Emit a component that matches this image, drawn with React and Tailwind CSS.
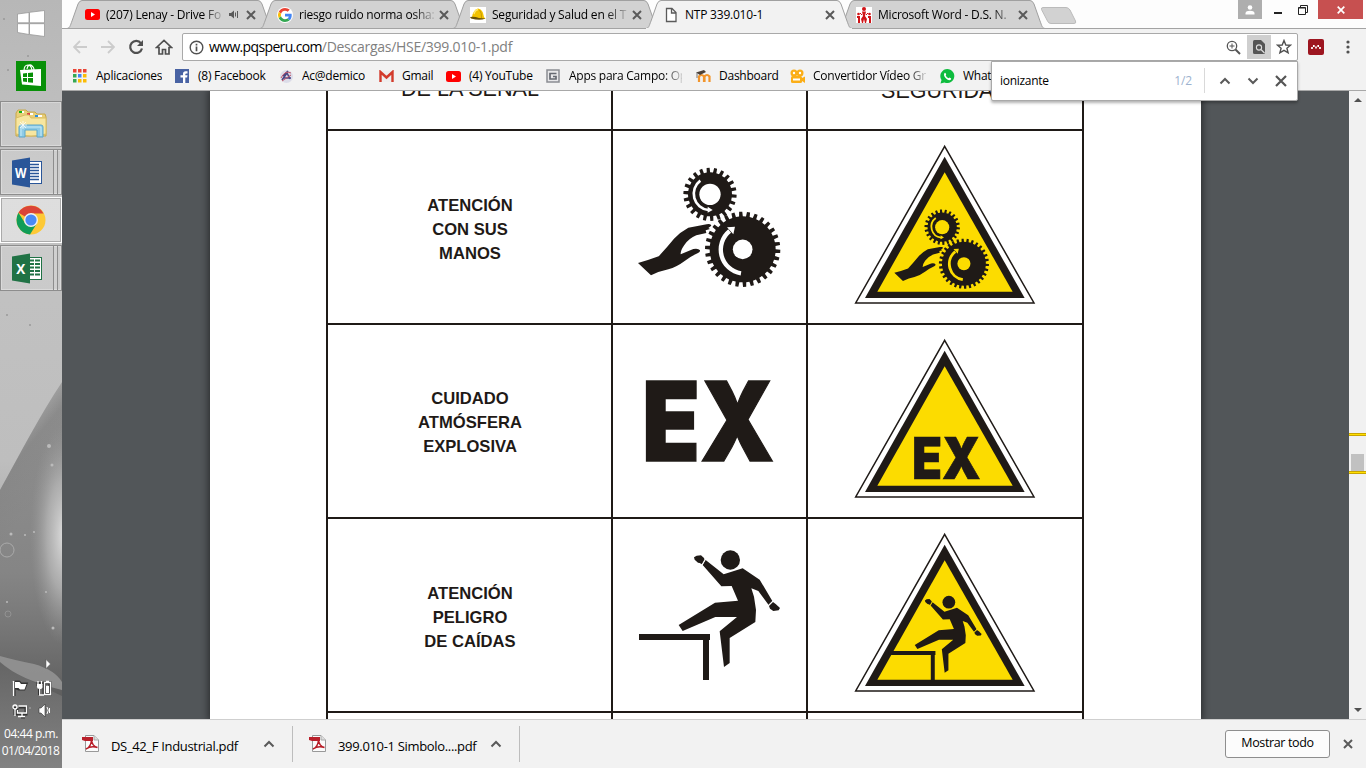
import React from "react";

const INK = "#1f1a17";
const SEGOE = "font-['Open_Sans','Noto_Sans',sans-serif]";

/* ---------- small glyphs ---------- */

function Cross({ className = "" }) {
  return (
    <svg className={className} width="10" height="10" viewBox="0 0 10 10">
      <path d="M1 1L9 9M9 1L1 9" stroke="#5a5a5a" strokeWidth="2" />
    </svg>
  );
}

function Caret({ down }) {
  return (
    <svg width="12" height="8" viewBox="0 0 12 8">
      <path d={down ? "M1.5 1.5L6 6L10.5 1.5" : "M1.5 6.5L6 2L10.5 6.5"} fill="none" stroke="#5a5a5a" strokeWidth="2" />
    </svg>
  );
}

function YouTubeIcon() {
  return (
    <svg width="15" height="15" viewBox="0 0 15 15">
      <rect x="0" y="2" width="15" height="11" rx="2.5" fill="#f00" />
      <path d="M6 5L10 7.500L6 10Z" fill="#fff" />
    </svg>
  );
}

function GoogleIcon() {
  return (
    <svg width="16" height="16" viewBox="0 0 48 48">
      <circle cx="24" cy="24" r="24" fill="#fff" />
      <g transform="translate(3 3) scale(.875)">
        <path fill="#EA4335" d="M24 9.500c3.500 0 6.700 1.200 9.200 3.600l6.900-6.900C35.900 2.400 30.500 0 24 0 14.600 0 6.500 5.400 2.600 13.200l8 6.200C12.400 13.700 17.700 9.500 24 9.500z" />
        <path fill="#4285F4" d="M47 24.500c0-1.600-.2-3.100-.4-4.500H24v9h12.900c-.6 3-2.300 5.500-4.800 7.200l7.700 6C44.400 38 47 31.800 47 24.500z" />
        <path fill="#FBBC05" d="M10.500 28.600a14.500 14.500 0 0 1 0-9.200l-8-6.200a24 24 0 0 0 0 21.600z" />
        <path fill="#34A853" d="M24 48c6.500 0 11.900-2.100 15.900-5.800l-7.700-6c-2.200 1.500-5 2.300-8.200 2.300-6.300 0-11.600-4.200-13.500-9.900l-8 6.200C6.500 42.600 14.600 48 24 48z" />
      </g>
    </svg>
  );
}

function HelmetIcon() {
  return (
    <svg width="16" height="16" viewBox="0 0 16 16">
      <rect width="16" height="16" fill="#fff" />
      <path d="M2 10Q3 3 8 1.500Q13 2 14 10L15.500 12L9 12Z" fill="#f2c200" />
      <path d="M4 7Q5 3 8 2.500" stroke="#ffe970" fill="none" strokeWidth="1.300" />
      <path d="M9.500 3Q12 6 11.500 11" stroke="#c99a00" fill="none" />
      <path d="M0 10Q4 9 9 11L15.500 11.500Q10 14 1 11.500Z" fill="#6b5306" />
    </svg>
  );
}

function PageIcon() {
  return (
    <svg width="16" height="16" viewBox="0 0 16 16">
      <path d="M3.500 1.500H9L13 5.500V14.500H3.500ZM8.500 1.500V6H13" fill="#fff" stroke="#5a5a5a" strokeWidth="1.300" />
    </svg>
  );
}

function PeopleIcon() {
  return (
    <svg width="16" height="16" viewBox="0 0 16 16">
      <rect width="16" height="16" fill="#fff" />
      <g fill="#d01418">
        <circle cx="8" cy="2" r="2" />
        <path d="M6 4.500H10L9 9L11 12L10 16H9L8 12L7 16H6L5 12L7 9Z" />
        <circle cx="2.500" cy="7" r="1.300" /><circle cx="13.500" cy="7" r="1.300" />
        <path d="M1 9H4V16H2V11H1ZM12 9H15V16H13V11H12Z" />
        <path d="M4 6L6 8M12 6L10 8" stroke="#d01418" />
      </g>
    </svg>
  );
}

function SpeakerIcon() {
  return (
    <svg width="10" height="9" viewBox="0 0 10 9">
      <path d="M0 3H2L5 .5V8.500L2 6H0Z" fill="#5a5a5a" />
      <path d="M6.500 2.500V6.500M8.500 1V8" stroke="#5a5a5a" fill="none" />
    </svg>
  );
}

/* ---------- tab strip ---------- */

function Tab({ icon, title, active, audio, first }) {
  return (
    <div className={`relative h-[29px] w-[206px] shrink-0 ${first ? "" : "-ml-[13px]"} ${active ? "z-10" : ""}`}>
      <svg className="absolute inset-0" width="206" height="29" viewBox="0 0 206 29">
        <path d="M0 28.500C3 28 3 26 5 21L11 4Q12.500 .5 15 .5H191Q193.500 .5 195 4L201 21C203 26 203 28 206 28.500" fill={active ? "#f2f2f2" : "#d2d2d2"} stroke="#a0a0a0" />
        <path d="M0 28.500H206" stroke={active ? "#f2f2f2" : "#a3a3a3"} />
      </svg>
      <div className="relative flex h-[29px] items-center pl-[17px] pr-[17px]">
        <span className="flex w-4 justify-center">{icon}</span>
        <span className={`ml-[6px] overflow-hidden whitespace-nowrap text-[12px] leading-4 tracking-[-0.22px] text-black ${audio ? "w-[116px]" : "w-[135px]"} ${active ? "" : "[mask-image:linear-gradient(to_right,black_84%,rgba(0,0,0,0.15))]"}`}>
          {title}
        </span>
        {audio && <span className="ml-[7px] flex w-[10px]"><SpeakerIcon /></span>}
        <Cross className="ml-auto" />
      </div>
    </div>
  );
}

function TabStrip() {
  return (
    <div className="relative flex h-[28px] bg-[#fdfdfd] pl-[5px] pr-[3px]">
      <Tab first audio icon={<YouTubeIcon />} title="(207) Lenay - Drive Fo" />
      <Tab icon={<GoogleIcon />} title="riesgo ruido norma osha:" />
      <Tab icon={<HelmetIcon />} title="Seguridad y Salud en el T" />
      <Tab active icon={<PageIcon />} title="NTP 339.010-1" />
      <Tab icon={<PeopleIcon />} title="Microsoft Word - D.S. N." />
      <svg className="-ml-[5px] mt-[6px]" width="38" height="19" viewBox="0 0 38 19">
        <path d="M3 1.500H26Q28.500 1.500 30 4L35.500 15Q36.500 17.500 34 17.500H11Q8.500 17.500 7.500 15L1.500 3.500Q1 1.500 3 1.500Z" fill="#d2d2d2" stroke="#bbb" />
      </svg>
      <div className="ml-auto flex items-start">
        <div className="flex h-[19px] w-6 items-center justify-center bg-[#aeaeae]">
          <svg width="10" height="10" viewBox="0 0 10 10" fill="#fff"><circle cx="5" cy="2.500" r="2.300" /><path d="M.5 9.500V8Q1 5.700 5 5.700Q9 5.700 9.500 8V9.500Z" /></svg>
        </div>
        <div className="flex h-5 w-5 items-center justify-end pt-[5px]"><div className="h-[2px] w-2 bg-[#222]" /></div>
        <div className="flex h-5 w-9 items-center justify-center pl-[6px]">
          <svg width="10" height="10" viewBox="0 0 10 10" fill="none" stroke="#222"><path d="M.5 2.500H7.500V9.500H.5ZM.5 3H7.500M2.500 2V.5H9.500V7.500H8" /></svg>
        </div>
        <div className="flex h-[19px] w-[45px] items-center justify-center bg-[#c75050]">
          <svg width="8" height="8" viewBox="0 0 8 8"><path d="M.7 .7L7.300 7.300M7.300 .7L.7 7.300" stroke="#fff" strokeWidth="1.700" /></svg>
        </div>
      </div>
    </div>
  );
}

/* ---------- address bar ---------- */

function Toolbar() {
  return (
    <div className="flex h-[35px] items-center border-t border-[#a3a3a3] bg-[#f2f2f2] pt-[2px]">
      <div className="flex w-[120px] items-center pl-[11px]">
        <svg width="14" height="14" viewBox="0 0 14 14" fill="none" stroke="#ccc" strokeWidth="1.800"><path d="M14 7H1.500M7 1L1 7L7 13" /></svg>
        <svg className="ml-[14px]" width="14" height="14" viewBox="0 0 14 14" fill="none" stroke="#ccc" strokeWidth="1.800"><path d="M0 7H12.500M7 1L13 7L7 13" /></svg>
        <svg className="ml-[13px]" width="16" height="16" viewBox="0 0 16 16"><path d="M13 4.300A6 6 0 1 0 14 9.500" fill="none" stroke="#505050" strokeWidth="2.200" /><path d="M15 1V7H9Z" fill="#505050" /></svg>
        <svg className="ml-[11px]" width="18" height="16" viewBox="0 0 18 16"><path d="M1.500 8.500L9 1.500L16.500 8.500H14V15H10.500V10.500H7.500V15H4V8.500Z" fill="none" stroke="#505050" strokeWidth="1.700" /></svg>
      </div>
      <div className="flex h-[28px] w-[1116px] items-center rounded-[2px] border border-[#a9a9a9] bg-white pl-[6px]">
        <svg width="15" height="15" viewBox="0 0 15 15"><circle cx="7.500" cy="7.500" r="6.300" fill="none" stroke="#505050" strokeWidth="1.400" /><path d="M7.500 6.500V11.200M7.500 3.700V5.400" stroke="#505050" strokeWidth="1.700" /></svg>
        <span className="ml-[5px] whitespace-nowrap text-[14px] leading-5 tracking-[-0.270px] text-[#808080]"><span className="tracking-[-0.650px] text-black">www.pqsperu.com</span>/Descargas/HSE/399.010-1.pdf</span>
        <div className="ml-auto flex items-center">
          <svg className="mr-[6px]" width="15" height="15" viewBox="0 0 15 15" fill="none" stroke="#555"><circle cx="6" cy="6" r="4.700" strokeWidth="1.300" /><path d="M9.500 9.500L14 14" strokeWidth="2" /><path d="M3.500 6H8.500M6 3.500V8.500" /></svg>
          <div className="flex size-6 items-center justify-center bg-[#cfcfcf]">
            <svg width="12" height="14" viewBox="0 0 12 14"><path d="M1.500 0H8L12 4V13Q12 14 10.500 14H1.500Q0 14 0 12.500V1.500Q0 0 1.500 0Z" fill="#555" /><circle cx="6" cy="7.500" r="2.600" fill="none" stroke="#ddd" strokeWidth="1.100" /><path d="M8 9.500L11.500 13" stroke="#ddd" strokeWidth="1.200" /></svg>
          </div>
          <svg className="ml-[5px] mr-[5px]" width="16" height="16" viewBox="0 0 16 16"><path d="M8 1.500L9.800 6L14.500 6.200L10.900 9.200L12.100 13.800L8 11.300L3.900 13.800L5.100 9.200L1.500 6.200L6.200 6Z" fill="none" stroke="#505050" strokeWidth="1.400" /></svg>
        </div>
      </div>
      <svg className="ml-[10px]" width="16" height="16" viewBox="0 0 16 16"><rect width="16" height="16" rx="2" fill="#9d1620" /><path d="M4 10V8M5.800 6V8M8 9.500V7.500M10.200 6V8M12 10V8" stroke="#fff" strokeWidth="1.700" /></svg>
      <svg className="ml-[22px]" width="4" height="14" viewBox="0 0 4 14" fill="#505050"><circle cx="2" cy="2" r="1.600" /><circle cx="2" cy="7" r="1.600" /><circle cx="2" cy="12" r="1.600" /></svg>
    </div>
  );
}

/* ---------- bookmarks ---------- */

const appsColors = ["#ea4335", "#ea4335", "#ea4335", "#34a853", "#4285f4", "#fbbc05", "#34a853", "#fbbc05", "#fbbc05"];

const bookmarks = [
  { w: "w-[102px]", text: "Aplicaciones", icon: <svg width="14" height="14">{appsColors.map((c, i) => <rect key={i} x={(i % 3) * 5} y={Math.floor(i / 3) * 5} width="3.500" height="3.500" fill={c} />)}</svg> },
  { w: "w-[104px]", text: "(8) Facebook", icon: <svg width="14" height="14"><rect width="14" height="14" fill="#4862a3" /><path d="M8 14V8.500H5.500V6.300H8V4.800Q8 2.200 10.600 2.200H12.500V4.400H11.300Q10.300 4.400 10.300 5.300V6.300H12.500L12.100 8.500H10.300V14Z" fill="#fff" /></svg> },
  { w: "w-[100px]", text: "Ac@demico", icon: <svg width="15" height="15"><circle cx="7.500" cy="7.500" r="6.500" fill="#dcdce8" /><path d="M3 11L8 4L11 10M5 9H12M9 2L4 7" stroke="#4a4785" strokeWidth="1.600" fill="none" /><path d="M2 9Q6 1 12 4M3 12L12 6" stroke="#c0556a" fill="none" /></svg> },
  { w: "w-[67px]", text: "Gmail", icon: <svg width="15" height="13"><path d="M1 1H14V12H1Z" fill="#eee" /><path d="M1.500 12V2L7.500 7.500L13.500 2V12" stroke="#d33b2c" strokeWidth="2.400" fill="none" /></svg> },
  { w: "w-[100px]", text: "(4) YouTube", icon: <YouTubeIcon /> },
  { w: "w-[150px]", text: "Apps para Campo: Op", fade: "w-[113px]", icon: <svg width="14" height="14"><rect x="1" y="1" width="12" height="12" fill="#e8e8ea" stroke="#8b8d93" strokeWidth="1.500" /><path d="M10.500 4.500H4V10H10V7.500H7" fill="none" stroke="#666a72" strokeWidth="1.700" /></svg> },
  { w: "w-[94px]", text: "Dashboard", icon: <svg width="16" height="14"><path d="M3 13V7.500Q5.500 4.500 8 7.500V13M8.500 13V7.500Q11 4.500 13.500 7.500V13" fill="none" stroke="#f2952c" strokeWidth="2.200" /><path d="M0 3.500L8 1L10 3L4 6Z" fill="#4b4038" /><path d="M1 4V9" stroke="#777" /></svg> },
  { w: "w-[150px]", text: "Convertidor Vídeo Gr", fade: "w-[113px]", icon: <svg width="16" height="15" fill="#fbae17"><circle cx="4" cy="4" r="3.500" /><circle cx="10" cy="4" r="3.500" /><rect x="1" y="7" width="11" height="7" rx="1.500" /><path d="M12 9L15 7.500V14L12 12Z" /><g fill="#fff"><circle cx="4" cy="4" r="1.200" /><circle cx="10" cy="4" r="1.200" /><path d="M3 9.500H10V11.500H3Z" /></g></svg> },
  { w: "w-[90px]", text: "WhatsApp", icon: <svg width="15" height="15"><path d="M.5 14.500L1.500 11A7 7 0 1 1 4.500 13.500Z" fill="#0ebc3e" /><path d="M4.500 4Q5.500 3 6.200 5.500L5.700 6.500Q6.500 8.500 8.600 9.300L9.600 8.500Q12 9.500 11 10.500Q9 12.500 6 9.500Q3 6.500 4.500 4Z" fill="#fff" /></svg> },
];

function Bookmarks() {
  return (
    <div className="flex h-[28px] items-center overflow-hidden border-b border-[#a8a8a8] bg-[#f2f2f2] pl-[11px] pb-[1px]">
      {bookmarks.map((b) => (
        <div key={b.text} className={`flex shrink-0 items-center ${b.w}`}>
          <span className="flex w-[15px] shrink-0">{b.icon}</span>
          <span className={`ml-2 overflow-hidden whitespace-nowrap text-[12px] leading-4 tracking-[-0.25px] text-black ${b.fade ? b.fade + " [mask-image:linear-gradient(to_right,black_84%,rgba(0,0,0,0.15))]" : ""}`}>{b.text}</span>
        </div>
      ))}
    </div>
  );
}

function FindBar() {
  return (
    <div className="absolute left-[929px] top-[61px] z-20 flex h-[40px] w-[307px] items-center rounded-b-[2px] border border-[#a9a9a9] bg-white pb-px shadow-[0_2px_3px_rgba(0,0,0,0.3)]">
      <span className="ml-2 text-[12px] leading-4 tracking-[-0.3px] text-black">ionizante</span>
      <span className="ml-auto mr-[12px] text-[12px] leading-4 tracking-[-0.1px] text-[#9db3cf]">1/2</span>
      <div className="h-[25px] w-px bg-[#d9d9d9]" />
      <div className="ml-[14px] flex"><Caret /></div>
      <div className="ml-[16px] flex"><Caret down /></div>
      <svg className="ml-[16px] mr-[10px]" width="12" height="12" viewBox="0 0 12 12"><path d="M1 1L11 11M11 1L1 11" stroke="#555" strokeWidth="2.200" /></svg>
    </div>
  );
}

/* ---------- pictograms ---------- */

function gearPath(cx, cy, inner, outer, teeth) {
  const step = (Math.PI * 2) / teeth;
  const at = (r, a) => `${(cx + r * Math.cos(a)).toFixed(2)} ${(cy + r * Math.sin(a)).toFixed(2)}`;
  const pts = [];
  for (let i = 0; i < teeth; i++) {
    const a = (i + 0.25) * step;
    pts.push(at(inner, a - step * 0.27), at(outer, a - step * 0.2), at(outer, a + step * 0.2), at(inner, a + step * 0.27));
  }
  return `M${pts.join("L")}Z`;
}

const smallGear = gearPath(255, 118, 66, 80, 22);
const bigGear = gearPath(353, 283, 99, 113, 30);

function Gears({ ground }) {
  return (
    <g fill={INK}>
      <path d={smallGear} />
      <path d={bigGear} />
      <circle cx="255" cy="118" r="32" fill={ground} />
      <circle cx="353" cy="283" r="29.500" fill={ground} />
      <path d="M226 77A49 49 0 0 0 250 165" fill="none" stroke={ground} strokeWidth="8" />
      <path d="M248 155L263 165L248 173Z" fill={ground} />
      <path d="M348 355A72 72 0 0 1 314 228" fill="none" stroke={ground} strokeWidth="13" />
      <path d="M306 217L330 215L325 238Z" fill={ground} />
      <path d="M39 324Q72 315 101 304Q125 278 147 251Q167 230 190 218L245 208Q258 205 259 212L250 219L255 222L242 226L244 234L214 241Q192 250 178 270Q166 287 167 298L205 282Q220 279 225 286Q226 291 219 294Q195 305 179 318Q155 336 130 343Q105 348 78 361Q60 344 39 324Z" />
    </g>
  );
}

function FallingMan({ ground }) {
  return (
    <g fill={INK}>
      <circle cx="316" cy="60" r="29" />
      <path d="M42 282H255V300H252V420H234V300H42Z" />
      <path d="M242 60L296 103L353 85L404 119L442 183L431 195L400 153L379 145L387 170L393 210L391 246L314 294V369L297 381L284 274L336 231H271L173 273L161 255L270 188L339 182L320 138L289 139L233 75Z" />
      <path d="M207 52L215 47L228 46L237 54L239 60L231 73L224 69L219 68L209 59Z" />
      <path d="M444 186L452 192L465 204L461 211L445 213L435 206L432 198Z" />
      <path d="M240 58L231 75M430 196L445 182" stroke={ground} strokeWidth="3" />
    </g>
  );
}

function Triangle({ children }) {
  return (
    <>
      <path d="M299 34L567 504H32Z" fill="#fff" stroke={INK} strokeWidth="4.500" />
      <path d="M299 65L539 489H60Z" fill={INK} />
      <path d="M299 112L503 470H97Z" fill="#fcdc00" />
      {children}
    </>
  );
}

function ExText({ x, y, size, width }) {
  return <text x={x} y={y} fontSize={size} fontWeight="900" fontFamily="Inter, 'Open Sans', sans-serif" textLength={width} lengthAdjust="spacingAndGlyphs" fill={INK} stroke={INK} strokeWidth={size * 0.012}>EX</text>;
}

const rows = [
  {
    lines: ["ATENCIÓN", "CON SUS", "MANOS"],
    pad: "pt-[6px]",
    picto: <g transform="translate(12 24) scale(.33333)"><Gears ground="#fff" /></g>,
    sign: <g transform="translate(122 198) scale(.665)"><Gears ground="#fcdc00" /></g>,
  },
  {
    lines: ["CUIDADO", "ATMÓSFERA", "EXPLOSIVA"],
    pad: "pt-[4px]",
    picto: <ExText x="29" y="136" size="110" width="132.500" />,
    sign: <ExText x="201" y="449" size="174" width="206" />,
  },
  {
    lines: ["ATENCIÓN", "PELIGRO", "DE CAÍDAS"],
    pad: "pt-[6px]",
    picto: <g transform="translate(12 21) scale(.33333)"><FallingMan ground="#fff" /></g>,
    sign: <g transform="translate(103 198) scale(.66)"><FallingMan ground="#fcdc00" /></g>,
  },
];

const cell = "border-b-2 border-r-2 border-[#1f1a17]";

function PdfPage() {
  return (
    <div className="h-full w-[991px] overflow-hidden bg-white pl-[116px] shadow-[0_0_7px_2px_rgba(0,0,0,0.45)]">
      <div className="grid w-[758px] grid-cols-[285px_195px_276px] border-l-2 border-[#1f1a17] font-['Liberation_Sans',sans-serif] text-[#1f1a17]">
        <div className={`${cell} h-[40px] text-center text-[21.600px] leading-6`}><div className="-mt-[14px] pl-px">DE LA SEÑAL</div></div>
        <div className={cell} />
        <div className={`${cell} text-center text-[21.500px] leading-6`}><div className="-mt-[12px]">SEGURIDAD</div></div>
        {rows.map((r) => (
          <React.Fragment key={r.lines[1]}>
            <div className={`${cell} ${r.pad} flex h-[194px] flex-col items-center justify-center pl-px text-[16.600px] font-bold leading-[24.300px]`}>
              {r.lines.map((l) => <div key={l}>{l}</div>)}
            </div>
            <div className={cell}><svg width="193" height="192" viewBox="0 0 193 192">{r.picto}</svg></div>
            <div className={cell}>
              <svg width="272" height="192" viewBox="0 0 272 192"><g transform="translate(37 4) scale(.33333)"><Triangle>{r.sign}</Triangle></g></svg>
            </div>
          </React.Fragment>
        ))}
        <div className="h-6 border-r-2 border-[#1f1a17]" />
        <div className="border-r-2 border-[#1f1a17]" />
        <div className="border-r-2 border-[#1f1a17]" />
      </div>
    </div>
  );
}

function Scrollbar() {
  return (
    <div className="flex w-[17px] flex-col items-center bg-[#f1f1f1]">
      <svg className="mt-[7px]" width="8" height="4"><path d="M0 4L4 0L8 4Z" fill="#505050" /></svg>
      <div className="mt-[331px] h-[3px] w-full border-y border-[#c9a400] bg-[#ffdf00]" />
      <div className="mt-[18px] h-[17px] w-[13px] bg-[#c1c1c1]" />
      <div className="h-[3px] w-full border-y border-[#c9a400] bg-[#ffdf00]" />
      <svg className="mb-[7px] mt-auto" width="8" height="4"><path d="M0 0H8L4 4Z" fill="#505050" /></svg>
    </div>
  );
}

/* ---------- downloads ---------- */

function PdfIcon() {
  return (
    <svg width="17" height="17" viewBox="0 0 17 17">
      <path d="M3.500 .5H12L16.500 5V16.500H3.500Z" fill="#fbfbfb" stroke="#999" />
      <path d="M12 .5V5H16.500" fill="#ddd" stroke="#aaa" />
      <path d="M4 14Q9 12 9.500 5Q10 11 15.500 12.500Q9 10.500 4 14Z" fill="none" stroke="#b71c26" strokeWidth="1.500" />
      <path d="M0 2H11V6H3L0 5Z" fill="#b9202b" />
    </svg>
  );
}

function Download({ name }) {
  return (
    <div className="flex h-9 w-[211px] items-center border-r border-[#bdbdbd]">
      <span className="mb-[2px]"><PdfIcon /></span>
      <span className="ml-[12px] w-[152px] whitespace-nowrap pt-[3px] text-[13px] leading-5 tracking-[-0.33px] text-black">{name}</span>
      <span className="mb-[1px] flex"><Caret /></span>
    </div>
  );
}

function DownloadBar() {
  return (
    <div className="flex h-[49px] items-center border-t border-[#cfcfcf] bg-[#f2f2f2] pl-[20px]">
      <Download name="DS_42_F Industrial.pdf" />
      <div className="pl-[16px]"><Download name="399.010-1 Simbolo....pdf" /></div>
      <div className="ml-auto flex h-7 w-[105px] items-center justify-center rounded-[3px] border border-[#8e8e8e] bg-[#fcfcfc] pb-px text-[12.500px] tracking-[-0.35px] text-black">Mostrar todo</div>
      <Cross className="ml-[13px] mr-[13px]" />
    </div>
  );
}

/* ---------- task bar ---------- */

function Wallpaper() {
  return (
    <svg className="absolute inset-0" width="62" height="768" viewBox="0 0 62 768">
      <defs>
        <linearGradient id="sky" x1="0" y1="0" x2="0" y2="1">
          <stop offset="0" stopColor="#b7b7b7" /><stop offset=".25" stopColor="#c3c3c3" /><stop offset=".6" stopColor="#bebebe" /><stop offset="1" stopColor="#777" />
        </linearGradient>
        <linearGradient id="drop" gradientUnits="userSpaceOnUse" x1="14" y1="430" x2="62" y2="470">
          <stop offset="0" stopColor="#a8a8a8" /><stop offset=".35" stopColor="#8c8c8c" /><stop offset="1" stopColor="#909090" />
        </linearGradient>
        <linearGradient id="shade" x1="0" y1="0" x2="0" y2="1">
          <stop offset="0" stopColor="#777" stopOpacity="0" /><stop offset=".6" stopColor="#707070" stopOpacity=".35" /><stop offset="1" stopColor="#5c5c5c" />
        </linearGradient>
        <radialGradient id="shine"><stop offset="0" stopColor="#dedede" /><stop offset=".5" stopColor="#bbb" stopOpacity=".7" /><stop offset="1" stopColor="#999" stopOpacity="0" /></radialGradient>
        <linearGradient id="floor" x1="0" y1="0" x2="0" y2="1">
          <stop offset="0" stopColor="#656565" /><stop offset="1" stopColor="#828282" />
        </linearGradient>
      </defs>
      <rect width="62" height="768" fill="url(#sky)" />
      <path d="M62 382C40 415 22 450 0 490V768H62Z" fill="url(#drop)" />
      <path d="M62 382C40 415 22 450 0 490V700H62Z" fill="url(#shade)" />
      <ellipse cx="64" cy="535" rx="34" ry="110" fill="url(#shine)" />
      <path d="M0 661Q18 676 62 696V768H0Z" fill="url(#floor)" />
      <path d="M0 656Q14 660 34 664Q55 670 62 682L62 690Q20 680 0 662Z" fill="#999" opacity=".8" />
      <g fill="none" stroke="#aaa"><circle cx="7" cy="550" r="7" /><circle cx="8" cy="614" r="3" stroke="#929292" /></g>
      <g fill="#bbb"><circle cx="49" cy="446" r="2" /><circle cx="52" cy="465" r="1.500" /><circle cx="11" cy="534" r="1.500" /><circle cx="34" cy="532" r="1" /><circle cx="25" cy="535" r="1" /><circle cx="53" cy="628" r="1.500" /><circle cx="46" cy="592" r="1" /><circle cx="7" cy="602" r="1" /></g>
      <g fill="#999"><circle cx="4" cy="19" r="1" /><circle cx="8" cy="70" r="1" /><circle cx="28" cy="56" r="1" /><circle cx="30" cy="708" r="1" /><circle cx="51" cy="694" r="1" /><circle cx="30" cy="325" r="1" /><circle cx="7" cy="315" r="1" /></g>
    </svg>
  );
}

function OfficeIcon({ letter, color, sheet }) {
  return (
    <svg width="30" height="31" viewBox="0 0 30 31">
      <rect x="15.500" y="4.500" width="14" height="22" fill="#fff" stroke={color} />
      <path d={sheet ? "M18 7.500H28M18 11H28M18 14.500H28M18 18H28M18 21.500H28" : "M18 7.500H27M18 10.500H27M18 13.500H27M18 16.500H27M18 19.500H27M18 22.500H27"} stroke={color} strokeWidth={sheet ? 2 : 1.300} />
      {sheet && <path d="M22.500 6V24" stroke="#fff" />}
      <path d="M0 3.500L18 .5V30.500L0 27.500Z" fill={color} />
      <text x="8.700" y="21" textAnchor="middle" fontFamily="Open Sans, sans-serif" fontWeight="700" fontSize="15" textLength={sheet ? 9 : 11.500} lengthAdjust="spacingAndGlyphs" fill="#fff">{letter}</text>
    </svg>
  );
}

function FolderIcon() {
  return (
    <svg width="32" height="30" viewBox="0 0 32 30">
      <path d="M1 4L3 1H11L13 3H20L22 5H30L31 8V27H1Z" fill="#e9cf78" stroke="#c6a84c" />
      <path d="M4 2H9V4H4Z" fill="#fff" /><path d="M4 2H7V4H4Z" fill="#12b312" />
      <path d="M12 4H18V6H12Z" fill="#fff" /><path d="M12 4H15V6H12Z" fill="#d44" />
      <path d="M20 6H27V8H20Z" fill="#fff" /><path d="M20 6H23V8H20Z" fill="#2b8fe0" />
      <path d="M1 9L10 6H14L16 9H31V25Q16 29 1 25Z" fill="#f7e6a0" stroke="#d9bd63" />
      <path d="M4 28V18Q4 16 6 16H26Q28 16 28 18V28H22V21H10V28Z" fill="#8ecbe6" stroke="#5ba6cb" />
      <path d="M6 27V18H26V27" stroke="#c6ebf7" fill="none" />
      <path d="M8 12V20M4 16H12M5 13L11 19M11 13L5 19" stroke="#fff" strokeWidth=".7" />
    </svg>
  );
}

function ChromeIcon() {
  return (
    <svg width="30" height="30" viewBox="0 0 30 30">
      <circle cx="15" cy="15" r="14.500" fill="#fdc936" />
      <path d="M15 15L2.440 7.750A14.500 14.500 0 0 1 27.560 8.500H15Z" fill="#db4437" />
      <path d="M2.440 7.750A14.500 14.500 0 0 0 14 29.460L20.800 18.500L15 15L9.300 18.500Z" fill="#109d58" />
      <circle cx="15" cy="15" r="7" fill="#f1f1f1" />
      <circle cx="15" cy="15" r="5.600" fill="#4a8af4" />
    </svg>
  );
}

function TaskButton({ children, stacked, active }) {
  return (
    <div className={`flex h-[46px] w-[62px] border ${active ? "border-white bg-white/45 outline outline-1 -outline-offset-2 outline-[#aaa]" : "border-[#8d8d8d] bg-white/15 shadow-[inset_0_0_0_1px_rgba(255,255,255,0.3)]"}`}>
      <div className={`flex flex-1 items-center justify-center ${stacked ? "border-r border-[#8d8d8d]" : ""}`}>{children}</div>
      {stacked && <div className="w-[4px] border-r border-[#8d8d8d] bg-white/10" />}
      {stacked && <div className="w-[3px]" />}
    </div>
  );
}

function TaskBar() {
  return (
    <div className="relative h-[768px] w-[62px] shrink-0 overflow-hidden bg-[#bdbdbd]">
      <Wallpaper />
      <div className="relative flex h-full flex-col items-center">
        <svg className="mt-[10px] shrink-0" width="28" height="27" viewBox="0 0 28 27" fill="#fff" stroke="#999" strokeWidth=".8">
          <path d="M.5 4L12 2.500V12.800H.5ZM12.500 2.300L27.500 .5V12.800H12.500ZM.5 13.700H12V24.500L.5 22.500ZM12.500 13.700H27.500V26.500L12.500 24.500Z" />
        </svg>
        <svg className="mt-[24px] shrink-0" width="30" height="30" viewBox="0 0 30 30">
          <rect width="30" height="30" fill="#089008" />
          <path d="M4 9L25 8V25L6 23.500Z" fill="#fff" />
          <path d="M8 10Q8 4 12 4Q15 4 16 9M11 8Q12 3 15 4Q18 6 18 9" stroke="#fff" fill="none" strokeWidth="1.200" />
          <path d="M7 12.500L11 12V16H7ZM12 12L17 11.500V16H12ZM7 17H11V21L7 20.500ZM12 17H17V21.700L12 21.200Z" fill="#089008" />
        </svg>
        <div className="mt-[10px] flex flex-col gap-[2px]">
          <TaskButton><FolderIcon /></TaskButton>
          <TaskButton stacked><OfficeIcon letter="W" color="#2a5699" /></TaskButton>
          <TaskButton active><ChromeIcon /></TaskButton>
          <TaskButton stacked><OfficeIcon letter="X" color="#207245" sheet /></TaskButton>
        </div>
        <div className="mt-auto flex w-full flex-col text-center text-white">
          <svg className="ml-[45px]" width="6" height="10"><path d="M1 .5L5.500 5L1 9.500Z" fill="#fff" stroke="#555" strokeWidth=".5" /></svg>
          <svg className="ml-[11px] mt-[10px]" width="42" height="40" viewBox="0 0 42 40">
            <g fill="none" stroke="#333" strokeWidth="3"><path d="M3 3V17M5 3H8L10 5H15L13 10H8L5 9Z" /><path d="M27 3V7M30 3V7M28.500 8V16M33 4H39V15H33Z" /><path d="M8 28H15V35H6V29M10 38H14M4 28V36" /></g>
            <path d="M2.500 2V17" stroke="#fff" strokeWidth="1.500" />
            <path d="M4 3H8.500L10 5H15.500L13.500 10.500H9L7.500 9H4Z" fill="#fff" />
            <g fill="none" stroke="#fff" strokeWidth="1.300"><path d="M27 2V6M30.500 2V6M28.700 10V16H33M33.500 3.500H39.500V15.500H33.500ZM35 2.500H38" /><path d="M7.500 27H15.500V34H6.500V31M11 34V37.500M7 37.500H14" /><circle cx="4" cy="28" r="2" /><path d="M4 30V37" /></g>
            <path d="M26 5H31.500V8Q31.500 10 28.700 10Q26 10 26 8ZM35 7H38V14H35Z" fill="#fff" />
            <path d="M28 29H30L34 25V38L30 34H28Z" fill="#fff" stroke="#333" strokeWidth=".6" />
            <path d="M36 28Q38.500 31 36 35M38.500 29V34" stroke="#fff" fill="none" />
          </svg>
          <div className="mt-[6px] whitespace-nowrap text-[12px] leading-[17px] tracking-[-0.450px]">04:44 p.m.</div>
          <div className="mb-[9px] whitespace-nowrap pr-px text-[12px] leading-[17px] tracking-[-0.600px]">01/04/2018</div>
        </div>
      </div>
    </div>
  );
}

export default function App() {
  return (
    <div className={`flex h-[768px] w-[1366px] overflow-hidden bg-white ${SEGOE}`}>
      <TaskBar />
      <div className="relative flex w-[1304px] flex-col">
        <TabStrip />
        <Toolbar />
        <Bookmarks />
        <FindBar />
        <div className="flex h-[628px] overflow-hidden bg-[#525659]">
          <div className="flex flex-1 overflow-hidden pl-[148px]"><PdfPage /></div>
          <Scrollbar />
        </div>
        <DownloadBar />
      </div>
    </div>
  );
}
